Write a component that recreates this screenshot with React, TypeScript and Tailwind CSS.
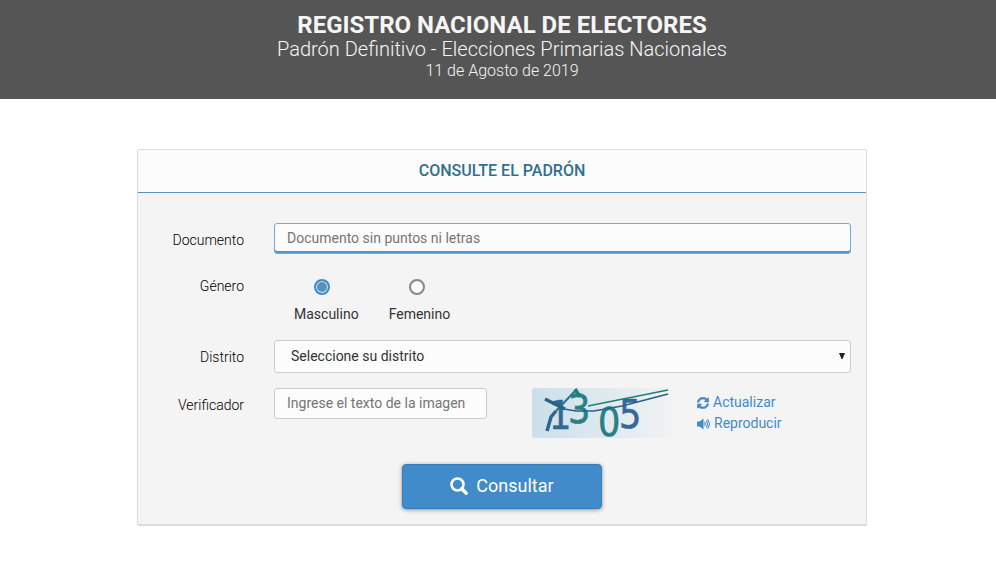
import type { ReactNode } from 'react';

const districts = [
  'Buenos Aires',
  'Capital Federal',
  'Catamarca',
  'Córdoba',
  'Mendoza',
  'Santa Fe',
];

const fieldClass =
  'rounded-[3px] border border-[#ccc] bg-[#fcfcfc] pb-0.5 text-sm text-[#333] outline-none placeholder:text-[#757575]';

const genders = [
  { value: 'M', label: 'Masculino' },
  { value: 'F', label: 'Femenino' },
];

function Row({ label, htmlFor, children }: { label: string; htmlFor?: string; children: ReactNode }) {
  const labelClass = 'pt-[7px] text-right text-sm leading-5 font-light text-black';

  return (
    <div className="grid grid-cols-[106px_1fr] gap-x-[30px]">
      {htmlFor ? (
        <label htmlFor={htmlFor} className={labelClass}>
          {label}
        </label>
      ) : (
        <span id="genero" className={labelClass}>
          {label}
        </span>
      )}
      {children}
    </div>
  );
}

function Captcha() {
  return (
    <svg width="150" height="50" viewBox="0 0 150 50" className="shrink-0 overflow-visible">
      <defs>
        <linearGradient id="fondo" x1="0" x2="1">
          <stop offset="0" stopColor="#cbdfea" />
          <stop offset="0.5" stopColor="#dfeaef" />
          <stop offset="1" stopColor="#f4f4f4" />
        </linearGradient>
      </defs>
      <rect width="150" height="50" rx="3" fill="url(#fondo)" />
      <text
        x="17 36 66 87"
        y="41 35 48 40"
        fontFamily="'DejaVu Sans Condensed', 'DejaVu Sans', sans-serif"
        fontSize="39"
        fill="#2a7f86"
        strokeWidth="0.6"
      >
        <tspan fill="#2f6a93" stroke="#2f6a93">1</tspan>
        <tspan stroke="#2a7f86">3</tspan>
        <tspan stroke="#2a7f86">0</tspan>
        <tspan fill="#376699" stroke="#376699">5</tspan>
      </text>
      <g fill="none">
        <path d="M15 43 L19 29 L24 23" stroke="#2f6690" strokeWidth="3.500" />
        <path d="M24 23 L44 2" stroke="#2a7580" strokeWidth="2" />
        <path d="M43 1 L48 9" stroke="#1f8078" strokeWidth="3.500" />
        <path d="M56 18 L136 2" stroke="#1f8071" strokeWidth="1.500" />
        <path d="M13 11 L33 21" stroke="#2b5f87" strokeWidth="3.500" />
        <path d="M32 21 L44 23 L62 23 L90 18 L136 6" stroke="#2b6087" strokeWidth="1.700" />
      </g>
    </svg>
  );
}

function RefreshIcon() {
  return (
    <svg width="12" height="12" viewBox="0 0 512 512" fill="currentColor" stroke="currentColor" strokeWidth="24" aria-hidden="true">
      <path d="M370.7 133.3C339.500 104 298.900 88 255.800 88c-77.500.1-144.300 53.200-162.800 126.900-1.300 5.400-6.100 9.200-11.700 9.200H24.100c-7.500 0-13.200-6.800-11.800-14.200C33.900 94.900 134.800 8 256 8c66.400 0 126.800 26.100 171.300 68.700L463 41c15.100-15.100 41-4.400 41 17v134c0 13.300-10.700 24-24 24H346c-21.400 0-32.100-25.900-17-41l41.700-41.700zM32 296h134c21.400 0 32.100 25.900 17 41l-41.800 41.800c31.300 29.300 71.800 45.300 114.900 45.300 77.400-.1 144.300-53.100 162.800-126.800 1.300-5.400 6.100-9.200 11.700-9.200h57.300c7.500 0 13.200 6.800 11.800 14.200C478.100 417.100 377.200 504 256 504c-66.400 0-126.800-26.100-171.300-68.700L49 471c-15.100 15.100-41 4.400-41-17V320c0-13.300 10.700-24 24-24z" />
    </svg>
  );
}

function VolumeIcon() {
  return (
    <svg width="13" height="12" viewBox="0 0 13 12" aria-hidden="true">
      <path d="M0 3.500h2.500L6.500 .5v11L2.500 8.500H0z" fill="currentColor" />
      <path
        d="M7.500 4.200c.8 1 .8 2.600 0 3.600M9 2.700c1.700 1.900 1.700 4.700 0 6.600M10.500 1.300c2.500 2.700 2.500 6.700 0 9.400"
        fill="none"
        stroke="currentColor"
        strokeWidth="1.100"
      />
    </svg>
  );
}

function SearchIcon() {
  return (
    <svg width="18" height="18" viewBox="0 0 18 18" fill="none" stroke="currentColor" aria-hidden="true">
      <circle cx="7.500" cy="7.500" r="6" strokeWidth="2.600" />
      <path d="M11.800 11.800l4.400 4.400" strokeWidth="3.400" strokeLinecap="round" />
    </svg>
  );
}

export default function App() {
  return (
    <div className="font-[Roboto,'Liberation_Sans',sans-serif] text-[#333]">
      <header className="bg-[#555] pt-3 pb-[18px] pl-2 text-center text-[#f5f5f5]">
        <h1 className="text-2xl leading-[26px] font-bold">REGISTRO NACIONAL DE ELECTORES</h1>
        <p className="text-xl leading-[23px] font-light">Padrón Definitivo - Elecciones Primarias Nacionales</p>
        <p className="text-base leading-5 font-light">11 de Agosto de 2019</p>
      </header>

      <main className="pt-[50px] pl-2">
        <section className="mx-auto w-full max-w-[730px] rounded-[2px] border border-b-2 border-[#ddd] bg-[#f4f4f4] shadow-[0_1px_1px_rgba(0,0,0,0.08)]">
          <h2 className="border-b border-[#5b8fbc] bg-[#fcfcfc] py-[11px] text-center text-base leading-5 font-medium text-[#31708f]">
            CONSULTE EL PADRÓN
          </h2>

          <form className="flex flex-col gap-[15px] pt-[30px] pr-[15px] pb-[15px]" onSubmit={(e) => e.preventDefault()}>
            <Row label="Documento" htmlFor="documento">
              <input
                id="documento"
                type="text"
                placeholder="Documento sin puntos ni letras"
                className="h-[31px] w-full rounded-[3px] border border-[#66afe9] bg-[#fcfcfc] px-3 pb-0.5 text-sm text-[#333] shadow-[inset_0_-1px_0_#4f97d2,inset_0_-2px_0_#7b858e] outline-none placeholder:text-[#757575]"
              />
            </Row>

            <Row label="Género">
              <div role="radiogroup" aria-labelledby="genero" className="flex gap-[30px] pt-[10px] pb-px pl-5">
                {genders.map(({ value, label }) => (
                  <label key={value} className="flex flex-col gap-[9px] text-sm leading-5">
                    <input
                      type="radio"
                      name="genero"
                      value={value}
                      defaultChecked={value === 'M'}
                      className="ml-5 size-4 appearance-none rounded-full border-2 border-[#888] bg-[#fcfcfc] checked:border-[#428bca] checked:bg-[#5b8fbc] checked:shadow-[inset_0_0_0_1px_#e4eef6]"
                    />
                    {label}
                  </label>
                ))}
              </div>
            </Row>

            <Row label="Distrito" htmlFor="distrito">
              <div className="relative">
                <select id="distrito" className={`${fieldClass} block h-[33px] w-full appearance-none px-4`}>
                  <option>Seleccione su distrito</option>
                  {districts.map((name) => (
                    <option key={name}>{name}</option>
                  ))}
                </select>
                <svg
                  width="6"
                  height="6"
                  viewBox="0 0 6 6"
                  className="pointer-events-none absolute top-[13px] right-[6px]"
                  aria-hidden="true"
                >
                  <path d="M0 0h6L3.500 6h-1z" fill="#222" />
                </svg>
              </div>
            </Row>

            <Row label="Verificador" htmlFor="verificador">
              <div className="flex items-start">
                <input
                  id="verificador"
                  type="text"
                  placeholder="Ingrese el texto de la imagen"
                  className={`${fieldClass} mr-[45px] h-[31px] w-[213px] px-3`}
                />
                <Captcha />
                <div className="flex flex-col pt-1 pl-[15px] text-sm leading-[21px] text-[#428bca]">
                  <a href="#actualizar" className="flex items-center gap-1">
                    <RefreshIcon />
                    Actualizar
                  </a>
                  <a href="#reproducir" className="flex items-center gap-1">
                    <VolumeIcon />
                    Reproducir
                  </a>
                </div>
              </div>
            </Row>

            <button
              type="submit"
              className="mt-[11px] ml-[15px] flex h-[45px] w-[200px] items-center justify-center gap-2 self-center rounded-[4px] border border-[#357ebd] bg-[#428bca] pb-0.5 text-lg text-white shadow-[0_1px_4px_rgba(0,0,0,0.4)]"
            >
              <SearchIcon />
              Consultar
            </button>
          </form>
        </section>
      </main>
    </div>
  );
}
